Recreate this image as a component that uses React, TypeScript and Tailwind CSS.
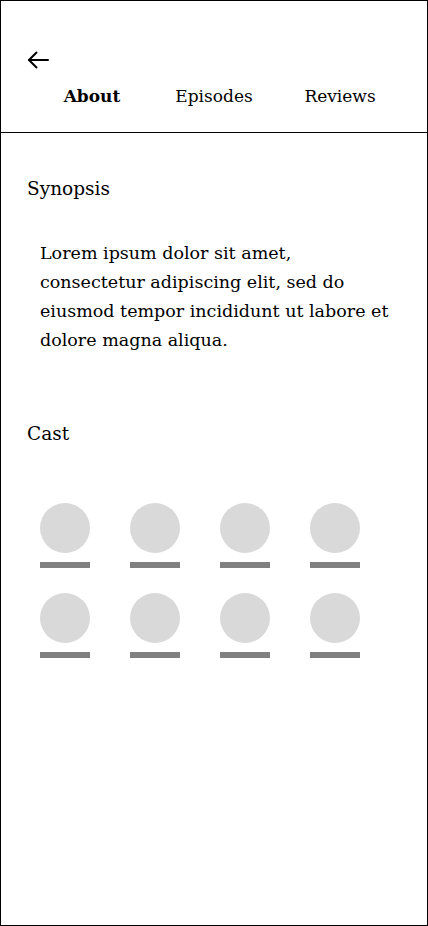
const cast = [0, 1, 2, 3, 4, 5, 6, 7];

function BackArrow() {
  return (
    <svg width="22" height="18" viewBox="0 0 22 18" fill="none" stroke="currentColor" strokeWidth="2" strokeLinecap="round" strokeLinejoin="round">
      <path d="M21 9H2" />
      <path d="M9.5 1.5L2 9l7.5 7.5" />
    </svg>
  );
}

export default function App() {
  return (
    <div className="w-[428px] h-[926px] border border-black bg-white text-black font-['DejaVu_Serif',serif] flex flex-col">
      <header className="h-[132px] border-b border-black flex flex-col">
        <div className="pt-[50px] pl-[26px] h-[83px]">
          <BackArrow />
        </div>
        <nav className="flex pl-[26px] text-[17px] leading-[24px]">
          <span className="w-[130px] text-center font-bold">About</span>
          <span className="w-[114px] text-center">Episodes</span>
          <span className="w-[138px] text-center">Reviews</span>
        </nav>
      </header>

      <section className="px-[26px] pt-[43px]">
        <h2 className="text-[18.5px] leading-[26px]">Synopsis</h2>
        <p className="mt-[37px] pl-[13px] pr-[10px] text-[17.5px] leading-[29px]">
          Lorem ipsum dolor sit amet, consectetur adipiscing elit, sed do eiusmod tempor incididunt ut labore et dolore magna aliqua.
        </p>
      </section>

      <section className="px-[26px] pt-[66px]">
        <h2 className="text-[18.5px] leading-[26px]">Cast</h2>
        <div className="mt-[56px] pl-[13px] grid grid-cols-[repeat(4,50px)] gap-x-[40px] gap-y-[25px]">
          {cast.map((i) => (
            <div key={i} className="flex flex-col gap-[9px]">
              <div className="w-[50px] h-[50px] rounded-full bg-[#d9d9d9]" />
              <div className="w-[50px] h-[6px] bg-[#808080]" />
            </div>
          ))}
        </div>
      </section>
    </div>
  );
}
